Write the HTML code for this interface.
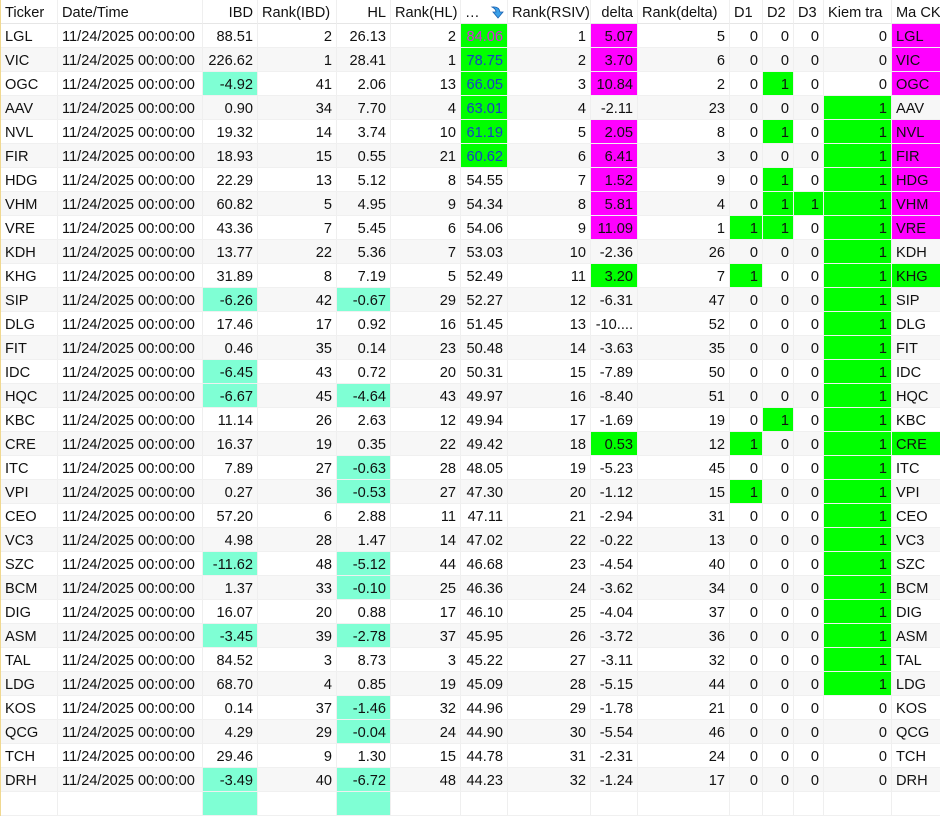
<!DOCTYPE html>
<html><head><meta charset="utf-8"><style>
body{margin:0;background:#fff;width:940px;height:797px;overflow:hidden;font-family:"Liberation Sans",sans-serif;font-size:14.6px;color:#111}
table{border-collapse:separate;border-spacing:0;table-layout:fixed;width:940px;border-left:1px solid #f0d890}
td{height:20px;padding:3px 4px 0 4px;border-right:1px solid #efefef;border-bottom:1px solid #f0f0f0;text-align:right;white-space:nowrap;overflow:hidden;line-height:20px}
td:nth-child(1),td:nth-child(2),td:nth-child(15){text-align:left}
tr:nth-child(odd) td{background:#f7f7f7}
tr.h td{background:#fff;border-bottom:1px solid #e6e6e6}
tr.h td:nth-child(1),tr.h td:nth-child(2),tr.h td:nth-child(4),tr.h td:nth-child(6),tr.h td:nth-child(8),tr.h td:nth-child(10),tr.h td:nth-child(11),tr.h td:nth-child(12),tr.h td:nth-child(13),tr.h td:nth-child(14),tr.h td:nth-child(15){text-align:left}
tr td.a{background:#7fffd4}
tr td.g{background:#00ff00}
tr td.m{background:#ff00ff}
.b{color:#1a3cc8}.mt{color:#e020e0}
</style></head><body>
<table>
<colgroup><col style="width:57px"><col style="width:145px"><col style="width:55px"><col style="width:79px"><col style="width:54px"><col style="width:70px"><col style="width:47px"><col style="width:83px"><col style="width:47px"><col style="width:92px"><col style="width:33px"><col style="width:31px"><col style="width:30px"><col style="width:68px"><col style="width:49px"></colgroup>
<tr class="h"><td>Ticker</td><td>Date/Time</td><td>IBD</td><td>Rank(IBD)</td><td>HL</td><td>Rank(HL)</td><td style="text-align:left">… <svg width="16" height="14" viewBox="0 0 16 14" style="vertical-align:-2px;margin-left:6px"><path d="M2 2 Q9 1 10 7 L13 7 L8 13 L3 7 L6 7 Q6 4 2 2Z" fill="#3aa0e8" stroke="#1a60b0" stroke-width="0.8"/></svg></td><td>Rank(RSIV)</td><td>delta</td><td>Rank(delta)</td><td>D1</td><td>D2</td><td>D3</td><td>Kiem tra</td><td>Ma CK</td></tr>
<tr><td>LGL</td><td>11/24/2025 00:00:00</td><td>88.51</td><td>2</td><td>26.13</td><td>2</td><td class="g mt">84.06</td><td>1</td><td class="m">5.07</td><td>5</td><td>0</td><td>0</td><td>0</td><td>0</td><td class="m">LGL</td></tr>
<tr><td>VIC</td><td>11/24/2025 00:00:00</td><td>226.62</td><td>1</td><td>28.41</td><td>1</td><td class="g b">78.75</td><td>2</td><td class="m">3.70</td><td>6</td><td>0</td><td>0</td><td>0</td><td>0</td><td class="m">VIC</td></tr>
<tr><td>OGC</td><td>11/24/2025 00:00:00</td><td class="a">-4.92</td><td>41</td><td>2.06</td><td>13</td><td class="g b">66.05</td><td>3</td><td class="m">10.84</td><td>2</td><td>0</td><td class="g">1</td><td>0</td><td>0</td><td class="m">OGC</td></tr>
<tr><td>AAV</td><td>11/24/2025 00:00:00</td><td>0.90</td><td>34</td><td>7.70</td><td>4</td><td class="g b">63.01</td><td>4</td><td>-2.11</td><td>23</td><td>0</td><td>0</td><td>0</td><td class="g">1</td><td>AAV</td></tr>
<tr><td>NVL</td><td>11/24/2025 00:00:00</td><td>19.32</td><td>14</td><td>3.74</td><td>10</td><td class="g b">61.19</td><td>5</td><td class="m">2.05</td><td>8</td><td>0</td><td class="g">1</td><td>0</td><td class="g">1</td><td class="m">NVL</td></tr>
<tr><td>FIR</td><td>11/24/2025 00:00:00</td><td>18.93</td><td>15</td><td>0.55</td><td>21</td><td class="g b">60.62</td><td>6</td><td class="m">6.41</td><td>3</td><td>0</td><td>0</td><td>0</td><td class="g">1</td><td class="m">FIR</td></tr>
<tr><td>HDG</td><td>11/24/2025 00:00:00</td><td>22.29</td><td>13</td><td>5.12</td><td>8</td><td>54.55</td><td>7</td><td class="m">1.52</td><td>9</td><td>0</td><td class="g">1</td><td>0</td><td class="g">1</td><td class="m">HDG</td></tr>
<tr><td>VHM</td><td>11/24/2025 00:00:00</td><td>60.82</td><td>5</td><td>4.95</td><td>9</td><td>54.34</td><td>8</td><td class="m">5.81</td><td>4</td><td>0</td><td class="g">1</td><td class="g">1</td><td class="g">1</td><td class="m">VHM</td></tr>
<tr><td>VRE</td><td>11/24/2025 00:00:00</td><td>43.36</td><td>7</td><td>5.45</td><td>6</td><td>54.06</td><td>9</td><td class="m">11.09</td><td>1</td><td class="g">1</td><td class="g">1</td><td>0</td><td class="g">1</td><td class="m">VRE</td></tr>
<tr><td>KDH</td><td>11/24/2025 00:00:00</td><td>13.77</td><td>22</td><td>5.36</td><td>7</td><td>53.03</td><td>10</td><td>-2.36</td><td>26</td><td>0</td><td>0</td><td>0</td><td class="g">1</td><td>KDH</td></tr>
<tr><td>KHG</td><td>11/24/2025 00:00:00</td><td>31.89</td><td>8</td><td>7.19</td><td>5</td><td>52.49</td><td>11</td><td class="g">3.20</td><td>7</td><td class="g">1</td><td>0</td><td>0</td><td class="g">1</td><td class="g">KHG</td></tr>
<tr><td>SIP</td><td>11/24/2025 00:00:00</td><td class="a">-6.26</td><td>42</td><td class="a">-0.67</td><td>29</td><td>52.27</td><td>12</td><td>-6.31</td><td>47</td><td>0</td><td>0</td><td>0</td><td class="g">1</td><td>SIP</td></tr>
<tr><td>DLG</td><td>11/24/2025 00:00:00</td><td>17.46</td><td>17</td><td>0.92</td><td>16</td><td>51.45</td><td>13</td><td>-10....</td><td>52</td><td>0</td><td>0</td><td>0</td><td class="g">1</td><td>DLG</td></tr>
<tr><td>FIT</td><td>11/24/2025 00:00:00</td><td>0.46</td><td>35</td><td>0.14</td><td>23</td><td>50.48</td><td>14</td><td>-3.63</td><td>35</td><td>0</td><td>0</td><td>0</td><td class="g">1</td><td>FIT</td></tr>
<tr><td>IDC</td><td>11/24/2025 00:00:00</td><td class="a">-6.45</td><td>43</td><td>0.72</td><td>20</td><td>50.31</td><td>15</td><td>-7.89</td><td>50</td><td>0</td><td>0</td><td>0</td><td class="g">1</td><td>IDC</td></tr>
<tr><td>HQC</td><td>11/24/2025 00:00:00</td><td class="a">-6.67</td><td>45</td><td class="a">-4.64</td><td>43</td><td>49.97</td><td>16</td><td>-8.40</td><td>51</td><td>0</td><td>0</td><td>0</td><td class="g">1</td><td>HQC</td></tr>
<tr><td>KBC</td><td>11/24/2025 00:00:00</td><td>11.14</td><td>26</td><td>2.63</td><td>12</td><td>49.94</td><td>17</td><td>-1.69</td><td>19</td><td>0</td><td class="g">1</td><td>0</td><td class="g">1</td><td>KBC</td></tr>
<tr><td>CRE</td><td>11/24/2025 00:00:00</td><td>16.37</td><td>19</td><td>0.35</td><td>22</td><td>49.42</td><td>18</td><td class="g">0.53</td><td>12</td><td class="g">1</td><td>0</td><td>0</td><td class="g">1</td><td class="g">CRE</td></tr>
<tr><td>ITC</td><td>11/24/2025 00:00:00</td><td>7.89</td><td>27</td><td class="a">-0.63</td><td>28</td><td>48.05</td><td>19</td><td>-5.23</td><td>45</td><td>0</td><td>0</td><td>0</td><td class="g">1</td><td>ITC</td></tr>
<tr><td>VPI</td><td>11/24/2025 00:00:00</td><td>0.27</td><td>36</td><td class="a">-0.53</td><td>27</td><td>47.30</td><td>20</td><td>-1.12</td><td>15</td><td class="g">1</td><td>0</td><td>0</td><td class="g">1</td><td>VPI</td></tr>
<tr><td>CEO</td><td>11/24/2025 00:00:00</td><td>57.20</td><td>6</td><td>2.88</td><td>11</td><td>47.11</td><td>21</td><td>-2.94</td><td>31</td><td>0</td><td>0</td><td>0</td><td class="g">1</td><td>CEO</td></tr>
<tr><td>VC3</td><td>11/24/2025 00:00:00</td><td>4.98</td><td>28</td><td>1.47</td><td>14</td><td>47.02</td><td>22</td><td>-0.22</td><td>13</td><td>0</td><td>0</td><td>0</td><td class="g">1</td><td>VC3</td></tr>
<tr><td>SZC</td><td>11/24/2025 00:00:00</td><td class="a">-11.62</td><td>48</td><td class="a">-5.12</td><td>44</td><td>46.68</td><td>23</td><td>-4.54</td><td>40</td><td>0</td><td>0</td><td>0</td><td class="g">1</td><td>SZC</td></tr>
<tr><td>BCM</td><td>11/24/2025 00:00:00</td><td>1.37</td><td>33</td><td class="a">-0.10</td><td>25</td><td>46.36</td><td>24</td><td>-3.62</td><td>34</td><td>0</td><td>0</td><td>0</td><td class="g">1</td><td>BCM</td></tr>
<tr><td>DIG</td><td>11/24/2025 00:00:00</td><td>16.07</td><td>20</td><td>0.88</td><td>17</td><td>46.10</td><td>25</td><td>-4.04</td><td>37</td><td>0</td><td>0</td><td>0</td><td class="g">1</td><td>DIG</td></tr>
<tr><td>ASM</td><td>11/24/2025 00:00:00</td><td class="a">-3.45</td><td>39</td><td class="a">-2.78</td><td>37</td><td>45.95</td><td>26</td><td>-3.72</td><td>36</td><td>0</td><td>0</td><td>0</td><td class="g">1</td><td>ASM</td></tr>
<tr><td>TAL</td><td>11/24/2025 00:00:00</td><td>84.52</td><td>3</td><td>8.73</td><td>3</td><td>45.22</td><td>27</td><td>-3.11</td><td>32</td><td>0</td><td>0</td><td>0</td><td class="g">1</td><td>TAL</td></tr>
<tr><td>LDG</td><td>11/24/2025 00:00:00</td><td>68.70</td><td>4</td><td>0.85</td><td>19</td><td>45.09</td><td>28</td><td>-5.15</td><td>44</td><td>0</td><td>0</td><td>0</td><td class="g">1</td><td>LDG</td></tr>
<tr><td>KOS</td><td>11/24/2025 00:00:00</td><td>0.14</td><td>37</td><td class="a">-1.46</td><td>32</td><td>44.96</td><td>29</td><td>-1.78</td><td>21</td><td>0</td><td>0</td><td>0</td><td>0</td><td>KOS</td></tr>
<tr><td>QCG</td><td>11/24/2025 00:00:00</td><td>4.29</td><td>29</td><td class="a">-0.04</td><td>24</td><td>44.90</td><td>30</td><td>-5.54</td><td>46</td><td>0</td><td>0</td><td>0</td><td>0</td><td>QCG</td></tr>
<tr><td>TCH</td><td>11/24/2025 00:00:00</td><td>29.46</td><td>9</td><td>1.30</td><td>15</td><td>44.78</td><td>31</td><td>-2.31</td><td>24</td><td>0</td><td>0</td><td>0</td><td>0</td><td>TCH</td></tr>
<tr><td>DRH</td><td>11/24/2025 00:00:00</td><td class="a">-3.49</td><td>40</td><td class="a">-6.72</td><td>48</td><td>44.23</td><td>32</td><td>-1.24</td><td>17</td><td>0</td><td>0</td><td>0</td><td>0</td><td>DRH</td></tr>
<tr><td></td><td></td><td class="a"></td><td></td><td class="a"></td><td></td><td></td><td></td><td></td><td></td><td></td><td></td><td></td><td></td><td></td></tr>
</table>
</body></html>
